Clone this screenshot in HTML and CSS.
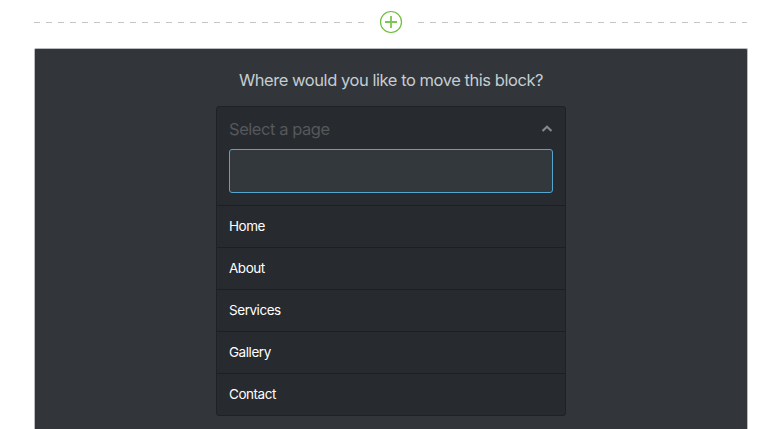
FILE: index.html
```html
<!DOCTYPE html>
<html lang="en">
<head>
    <meta charset="UTF-8">
    <title>Move block</title>
    <link rel="stylesheet" href="styles.css">
</head>
<body>

<div class="add-row">
    <span class="dash-line dash-left"></span>
    <button class="add-btn" aria-label="Add block">
        <svg width="24" height="24" viewBox="0 0 24 24" fill="none" stroke="#6cbf3a">
            <circle cx="12" cy="12" r="10.5" stroke-width="1.2"/>
            <path d="M12 6v12M6 12h12" stroke-width="1.8" stroke="#7ac74f"/>
        </svg>
    </button>
    <span class="dash-line dash-right"></span>
</div>

<div class="move-panel">
    <h2>Where would you like to move this block?</h2>

    <div class="select-box">
        <div class="select-head">
            <div class="select-title">
                <span>Select a page</span>
                <svg width="12" height="8" viewBox="0 0 12 8" fill="none" stroke="#85888c" stroke-width="2.2">
                    <path d="M1.500 6 6 1.800 10.500 6"/>
                </svg>
            </div>
            <input type="text" class="search-input">
        </div>
        <ul class="page-list">
            <li>Home</li>
            <li>About</li>
            <li>Services</li>
            <li>Gallery</li>
            <li>Contact</li>
        </ul>
    </div>
</div>

</body>
</html>
```

FILE: styles.css
```css
* {
    box-sizing: border-box;
    margin: 0;
    padding: 0;
}

html, body {
    height: 429px;
    overflow: hidden;
}

body {
    background: #fff;
    font-family: "Inter", "Liberation Sans", sans-serif;
    padding: 0 34px;
}

.add-row {
    display: flex;
    align-items: center;
    height: 48px;
    padding-bottom: 4px;
}

.dash-line {
    height: 1px;
    background: repeating-linear-gradient(to right, #c4c5c9 0 6px, transparent 6px 12px);
}

.dash-left {
    width: 331px;
    margin-right: 14px;
}

.dash-right {
    width: 329px;
    margin-left: 15px;
}

.add-btn {
    display: flex;
    border: none;
    background: none;
}

.move-panel {
    height: 381px;
    background: #32363a;
    border: 1px solid #b9babd;
    border-bottom: none;
    border-radius: 2px 2px 0 0;
    padding-top: 19px;
}

.move-panel h2 {
    color: #c5ccd3;
    font-size: 16.5px;
    font-weight: 400;
    letter-spacing: -0.45px;
    line-height: 24px;
    text-align: center;
    margin-bottom: 14px;
}

.select-box {
    width: 350px;
    margin: 0 auto;
    background: #272a2e;
    border: 1px solid #1f2124;
    border-radius: 3px;
}

.select-head {
    padding: 0 12px 12px;
}

.select-title {
    display: flex;
    align-items: center;
    justify-content: space-between;
    height: 42px;
    padding-top: 1px;
    color: #55585c;
    font-size: 16.5px;
    letter-spacing: -0.45px;
}

.search-input {
    display: block;
    width: 100%;
    height: 44px;
    background: #33383c;
    border: 1px solid #52a6cf;
    border-radius: 3px;
    outline: none;
}

.page-list {
    list-style: none;
}

.page-list li {
    height: 42px;
    line-height: 40px;
    padding: 0 12px;
    border-top: 1px solid #1d1f22;
    color: #fff;
    font-size: 13.5px;
    letter-spacing: -0.45px;
}
```
